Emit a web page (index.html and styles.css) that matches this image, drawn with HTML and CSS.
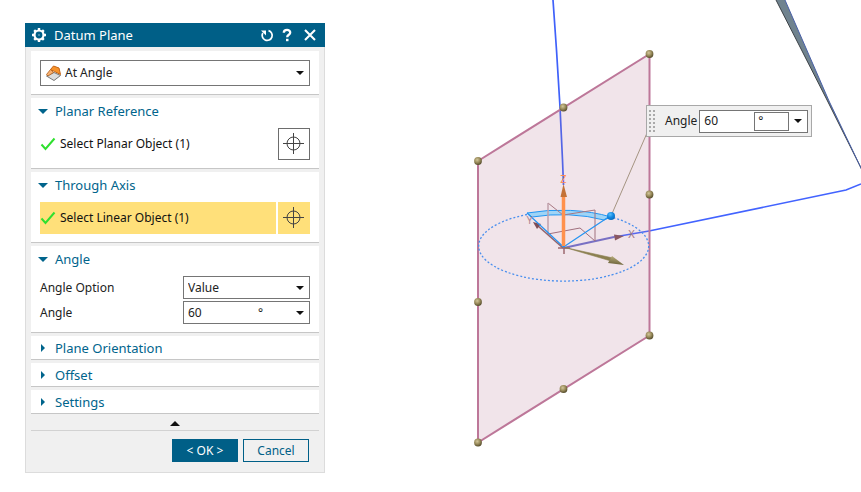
FILE: index.html
```html
<!DOCTYPE html>
<html lang="en">
<head>
<meta charset="utf-8">
<meta name="viewport" content="width=device-width, initial-scale=1">
<title>Datum Plane</title>
<link rel="stylesheet" href="styles.css">
</head>
<body>
<main class="workspace">
  <form class="dialog" aria-labelledby="dialog-title">
    <header class="titlebar">
      <svg class="gear" viewBox="0 0 16 16" width="16" height="16" aria-hidden="true">
        <circle cx="8" cy="8" r="4.5" fill="none" stroke="#fff" stroke-width="2.2"/>
        <path d="M8 1v2M8 13v2M1 8h2M13 8h2M3.2 3.2l1.4 1.4M11.4 11.4l1.4 1.4M3.2 12.8l1.4-1.4M11.4 4.6l1.4-1.4" stroke="#fff" stroke-width="2.4"/>
        <circle cx="8" cy="8" r="1" fill="#fff" opacity=".35"/>
      </svg>
      <h1 class="title" id="dialog-title">Datum Plane</h1>
      <button class="tool" type="button" aria-label="Reset">
        <svg viewBox="0 0 14 14" width="14" height="14"><path d="M8.500 2.600A5 5 0 1 1 2.800 5" fill="none" stroke="#fff" stroke-width="1.700"/><path d="M1 2.500h5v5z" fill="#fff"/></svg>
      </button>
      <button class="tool" type="button" aria-label="Help">
        <svg viewBox="0 0 14 14" width="14" height="14"><path d="M3.8 4.8C3.8 .9 10.4 1 10.2 4.7C10.1 6.8 7.2 6.7 7.2 9.2" fill="none" stroke="#fff" stroke-width="2.3"/><path d="M6 10.8h2.5v2.4H6z" fill="#fff"/></svg>
      </button>
      <button class="tool" type="button" aria-label="Close">
        <svg viewBox="0 0 14 14" width="14" height="14"><path d="M2 2l10 10M12 2L2 12" stroke="#fff" stroke-width="2.1"/></svg>
      </button>
    </header>

    <div class="sections">
      <section class="section type-section">
        <div class="field type-field">
          <svg class="type-icon" viewBox="0 0 18 18" width="18" height="18" aria-hidden="true">
            <path d="M1.500 12L9 8.500L15.500 11.500L9 16.500z" fill="#dcdcdc" stroke="#777"/>
            <path d="M1.500 10.500L5.500 5.500L8.500 8.500L3 12z" fill="#f9b170" stroke="#a95b1a" stroke-width=".8"/>
            <path d="M5.500 5.500L8.500 2L14 4L15.500 10.500L9.500 7.500z" fill="#f7922a" stroke="#c36417"/>
          </svg>
          <select class="select" aria-label="Type"><option>At Angle</option></select>
          <svg class="arrow" viewBox="0 0 8 4" width="8" height="4" aria-hidden="true"><path d="M0 0h8L4 4z"/></svg>
        </div>
      </section>

      <section class="section open">
        <h2><button class="heading" type="button" aria-expanded="true"><svg viewBox="0 0 10 10" width="10" height="10"><path d="M0 3h10L5 8z"/></svg>Planar Reference</button></h2>
        <div class="pick">
          <div class="pick-label" id="planar-label"><svg viewBox="0 0 16 14" width="16" height="14" aria-hidden="true"><path d="M1.5 7.5L5.5 12L14.5 1.5"/></svg>Select Planar Object (1)</div>
          <button class="target" type="button" aria-labelledby="planar-label"><svg viewBox="0 0 22 22" width="22" height="22"><circle cx="10.500" cy="10.500" r="6.500"/><path d="M10.500 0v21M0 10.500h21"/></svg></button>
        </div>
      </section>

      <section class="section open">
        <h2><button class="heading" type="button" aria-expanded="true"><svg viewBox="0 0 10 10" width="10" height="10"><path d="M0 3h10L5 8z"/></svg>Through Axis</button></h2>
        <div class="pick active">
          <div class="pick-label" id="axis-label"><svg viewBox="0 0 16 14" width="16" height="14" aria-hidden="true"><path d="M1.5 7.5L5.5 12L14.5 1.5"/></svg>Select Linear Object (1)</div>
          <button class="target" type="button" aria-labelledby="axis-label"><svg viewBox="0 0 22 22" width="22" height="22"><circle cx="10.500" cy="10.500" r="6.500"/><path d="M10.500 0v21M0 10.500h21"/></svg></button>
        </div>
      </section>

      <section class="section open">
        <h2><button class="heading" type="button" aria-expanded="true"><svg viewBox="0 0 10 10" width="10" height="10"><path d="M0 3h10L5 8z"/></svg>Angle</button></h2>
        <div class="rows">
          <label for="angle-option">Angle Option</label>
          <div class="field">
            <select class="select" id="angle-option"><option>Value</option></select>
            <svg class="arrow" viewBox="0 0 8 4" width="8" height="4" aria-hidden="true"><path d="M0 0h8L4 4z"/></svg>
          </div>
          <label for="angle">Angle</label>
          <div class="field">
            <input class="value" id="angle" type="text" value="60">
            <span class="unit">°</span>
            <button class="drop" type="button" aria-label="Angle choices"><svg class="arrow" viewBox="0 0 8 4" width="8" height="4"><path d="M0 0h8L4 4z"/></svg></button>
          </div>
        </div>
      </section>

      <section class="section"><h2><button class="heading" type="button" aria-expanded="false"><svg viewBox="0 0 10 10" width="10" height="10"><path d="M3 1v8l4-4z"/></svg>Plane Orientation</button></h2></section>
      <section class="section"><h2><button class="heading" type="button" aria-expanded="false"><svg viewBox="0 0 10 10" width="10" height="10"><path d="M3 1v8l4-4z"/></svg>Offset</button></h2></section>
      <section class="section"><h2><button class="heading" type="button" aria-expanded="false"><svg viewBox="0 0 10 10" width="10" height="10"><path d="M3 1v8l4-4z"/></svg>Settings</button></h2></section>
    </div>

    <button class="collapse" type="button" aria-label="Show less"><svg viewBox="0 0 10 5" width="10" height="5"><path d="M0 5L5 0L10 5z"/></svg></button>
    <footer class="actions">
      <button class="action primary" type="button">&lt; OK &gt;</button>
      <button class="action" type="button">Cancel</button>
    </footer>
  </form>

  <div class="scene">
    <svg class="drawing" viewBox="325 0 536 492" role="img" aria-label="Datum plane preview">
      <defs>
        <radialGradient id="bead" cx=".4" cy=".35" r=".7"><stop offset="0" stop-color="#d2c69a"/><stop offset=".5" stop-color="#9a8c5c"/><stop offset="1" stop-color="#4f4626"/></radialGradient>
        <radialGradient id="knob" cx=".4" cy=".3" r=".8"><stop offset="0" stop-color="#58c0ff"/><stop offset=".5" stop-color="#1287e0"/><stop offset="1" stop-color="#0865b4"/></radialGradient>
        <linearGradient id="gold" x1="0" y1="0" x2="-.2" y2="1"><stop offset="0" stop-color="#b5aa7a"/><stop offset="1" stop-color="#5e552d"/></linearGradient>
      </defs>
      <path d="M776 0h9L829 101L862 170L826 98L799 45z" fill="#70838f"/>
      <path d="M776 0L799 45L826 98L862 170" fill="none" stroke="#3d4247"/>
      <path d="M785 0L829 101L862 170" fill="none" stroke="#4960a8"/>
      <path d="M478 161L649.500 54V335.500L478 442.500z" fill="#f1e4ea"/>
      <path d="M553 0L556.500 50L560 107" fill="none" stroke="#3f61fa" stroke-width="1.700"/>
      <path d="M560 107L562.500 160L563.500 185" fill="none" stroke="#5365e6" stroke-width="1.700"/>
      <path d="M563.500 248L614 237" fill="none" stroke="#7970c4" stroke-width="2"/>
      <path d="M614 237L649 231" fill="none" stroke="#5668ef" stroke-width="1.700"/>
      <path d="M649 231L846 190L861 184" fill="none" stroke="#4263ff" stroke-width="1.600"/>
      <path d="M478 161L649.500 54V335.500L478 442.500z" fill="none" stroke="#bd7799" stroke-width="2"/>
      <path d="M527 214.500A85 35 0 1 0 611 217" fill="none" stroke="#4a8fee" stroke-width="1.300" stroke-dasharray="2 2"/>
      <path d="M527 213A85 35 0 0 1 611 217L604 220A77 31.500 0 0 0 532 217z" fill="#9fd4f6" stroke="#2196f3"/>
      <g fill="none" stroke="#a87882">
        <path d="M548 203L563 215L595 210"/>
        <path d="M548 234L580 228L595 241V210" stroke="#a0707e"/>
        <path d="M548 203V234" stroke="#bfa0ab" stroke-width="1.500"/>
        <path d="M558 248h12M564 241v13" stroke="#9c6870" stroke-width="1.500"/>
        <path d="M563 248L538 226" stroke="#94626b" stroke-width="1.600"/>
      </g>
      <path d="M533 222L541 224L537 229z" fill="#7e4d56"/>
      <path d="M624 236L614 234.500L615 240.500z" fill="#8b5861"/>
      <path d="M563.500 247L527 213M563.500 247L610 216" fill="none" stroke="#2594f2" stroke-width="1.200"/>
      <path d="M565 247.500L613 258L611 261z" fill="#8b8050" stroke="#8b8050" stroke-width=".6"/>
      <path d="M612 256L624 265L608 263z" fill="url(#gold)"/>
      <path d="M563.500 246V195" stroke="#ff914d" stroke-width="3.500"/>
      <path d="M563.500 184L567 197H560.500z" fill="#c37238"/>
      <text class="axis" x="563.500" y="183" fill="#ff8d50">Z</text>
      <text class="axis" x="631.500" y="238" fill="#9b7684">X</text>
      <text class="axis" x="529.500" y="224" fill="#af8995">Y</text>
      <path d="M611 216L647 133" stroke="#a59482" stroke-width="1"/>
      <circle cx="611" cy="216" r="4" fill="url(#knob)"/>
      <g fill="url(#bead)">
        <circle cx="478" cy="161" r="3.900"/><circle cx="563.500" cy="107.500" r="3.900"/><circle cx="649.500" cy="54" r="3.900"/><circle cx="649.500" cy="194.500" r="3.900"/>
        <circle cx="649.500" cy="335.500" r="3.900"/><circle cx="563.500" cy="389" r="3.900"/><circle cx="478" cy="442.500" r="3.900"/><circle cx="478" cy="302" r="3.900"/>
      </g>
    </svg>
    <div class="floating">
      <svg class="grip" viewBox="0 0 7 24" width="7" height="24" aria-hidden="true"><path d="M1 1v24M5 1v24"/></svg>
      <label for="live-angle">Angle</label>
      <div class="field">
        <input class="value" id="live-angle" type="text" value="60">
        <span class="unit boxed">°</span>
        <button class="drop" type="button" aria-label="Angle choices"><svg class="arrow" viewBox="0 0 8 4" width="8" height="4"><path d="M0 0h8L4 4z"/></svg></button>
      </div>
    </div>
  </div>
</main>
</body>
</html>
```

FILE: styles.css
```css
* {
  box-sizing: border-box;
}

body {
  margin: 0;
  background: #fff;
  color: #222;
  font: 12px/16px "Noto Sans", "Open Sans", sans-serif;
}

button,
input,
select {
  margin: 0;
  padding: 0;
  border: 0;
  border-radius: 0;
  background: transparent;
  color: inherit;
  font: inherit;
}

svg {
  display: block;
  flex: none;
}

h1,
h2 {
  margin: 0;
  font-weight: 400;
}

.workspace {
  display: flex;
  align-items: flex-start;
}

.dialog {
  flex: none;
  width: 300px;
  margin: 23px 0 0 25px;
  background: #f0f0f0;
  border: 1px solid #dcdcdc;
  border-top: 0;
}

.titlebar {
  display: flex;
  align-items: center;
  height: 24px;
  margin: 0 -1px;
  padding: 0 8px 0 6px;
  background: #005f87;
  color: #fff;
}

.title {
  flex: 1;
  padding-left: 7px;
  font-size: 13px;
  line-height: 20px;
}

.tool {
  margin-left: 6px;
}

.tool:last-child {
  margin-left: 9px;
}

.sections {
  display: grid;
  gap: 3px;
  padding: 4px 5px 0;
}

.section {
  background: #fff;
  border-bottom: 1px solid #c6c6c6;
  padding: 0 9px;
}

.type-section {
  padding: 9px 9px 8px;
}

.heading {
  display: flex;
  align-items: center;
  gap: 7px;
  width: 100%;
  height: 23px;
  margin-left: -2px;
  color: #00648c;
  fill: #00648c;
  font-size: 13px;
  line-height: 20px;
}

.section.open .heading {
  height: 25px;
}

.field {
  display: flex;
  align-items: center;
  min-width: 0;
  height: 23px;
  padding: 0 5px 0 4px;
  background: #fff;
  border: 1px solid #757575;
}

.type-field {
  height: 26px;
}

.type-icon {
  margin-right: 2px;
}

.select {
  flex: 1;
  min-width: 0;
  appearance: none;
}

.value {
  flex: 1;
  width: 50px;
  min-width: 0;
}

.unit {
  width: 38px;
}

.arrow {
  fill: #111;
}

.pick {
  display: flex;
  gap: 2px;
  margin: 5px 0 8px;
}

.pick-label {
  display: flex;
  flex: 1;
  align-items: center;
  gap: 4px;
  height: 32px;
  color: #111;
}

.pick-label path {
  fill: none;
  stroke: #2fe02f;
  stroke-width: 2;
}

.target {
  display: grid;
  place-items: center;
  width: 32px;
  height: 32px;
  border: 1px solid #6d6d6d;
  fill: none;
  stroke: #444;
}

.active .pick-label,
.active .target {
  background: #ffe07a;
  border-color: #ffe07a;
}

.rows {
  display: grid;
  grid-template-columns: 1fr 127px;
  align-items: center;
  gap: 2px 0;
  padding: 5px 0 8px;
}

.collapse {
  display: flex;
  align-items: center;
  justify-content: center;
  width: calc(100% - 10px);
  height: 17px;
  margin: 0 5px;
  padding-top: 2px;
  border-bottom: 1px solid #d2d2d2;
  fill: #111;
}

.actions {
  display: flex;
  justify-content: flex-end;
  gap: 5px;
  padding: 8px 15px 10px;
}

.action {
  width: 66px;
  height: 23px;
  border: 1px solid #005f87;
  color: #005f87;
}

.action.primary {
  background: #005f87;
  color: #fff;
}

.scene {
  position: relative;
  flex: 1;
  min-width: 0;
}

.drawing {
  width: 100%;
  height: auto;
}

.axis {
  font: 11px "Noto Sans", sans-serif;
  text-anchor: middle;
}

.floating {
  position: absolute;
  left: 321px;
  top: 105px;
  display: flex;
  align-items: center;
  padding: 3px 3px 3px 2px;
  background: #f0f0f0;
  border: 1px solid #a8a8a8;
}

.floating .field {
  width: 109px;
}

.floating label {
  padding: 0 2px 0 9px;
}

.grip path {
  stroke: #aaa;
  stroke-width: 2;
  stroke-dasharray: 2 2;
}

.boxed {
  width: 35px;
  height: 19px;
  margin-right: 5px;
  padding-left: 3px;
  border: 1px solid #757575;
}
```
